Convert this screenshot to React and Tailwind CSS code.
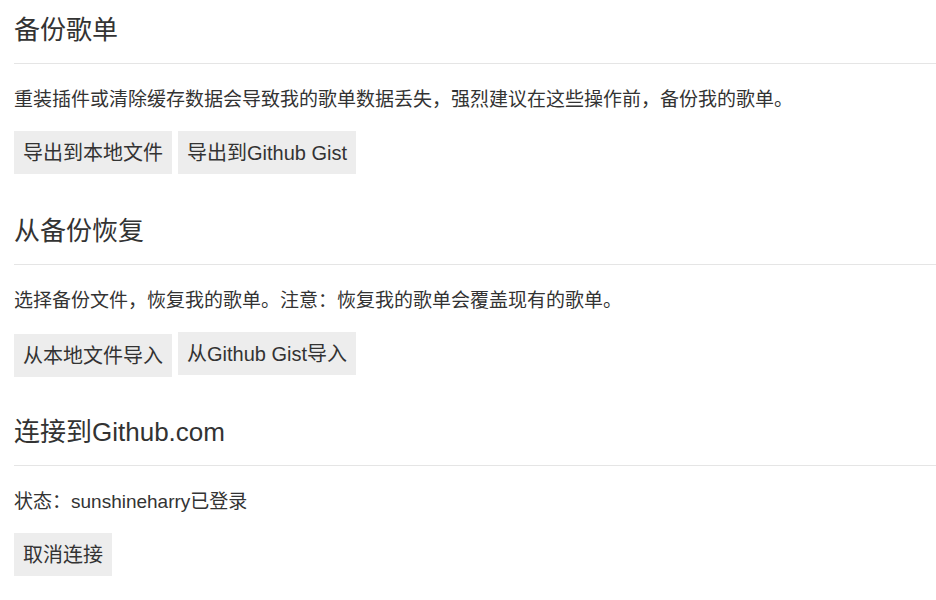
const font = { fontFamily: '"Liberation Sans", "Noto Sans CJK SC", sans-serif' };

function Section({ title, children }) {
  return (
    <section className="pt-[12px] pb-[27px] last:pb-0">
      <h2 className="text-[26px] leading-[36px] font-normal text-[#333] pb-[15px] border-b border-[#e5e5e5]">
        {title}
      </h2>
      {children}
    </section>
  );
}

function Desc({ children }) {
  return <p className="mt-[22px] text-[19px] leading-[28px] text-[#333]">{children}</p>;
}

function Btn({ children, className = "" }) {
  return (
    <button className={`bg-[#ededed] text-[#333] text-[20px] leading-[23px] px-[9px] pt-[11px] pb-[9px] whitespace-nowrap ${className}`}>
      {children}
    </button>
  );
}

export default function App() {
  return (
    <div className="min-h-screen bg-white pl-[14px]" style={font}>
      <Section title="备份歌单">
        <Desc>重装插件或清除缓存数据会导致我的歌单数据丢失，强烈建议在这些操作前，备份我的歌单。</Desc>
        <div className="mt-[17px] flex items-start gap-[6px]">
          <Btn>导出到本地文件</Btn>
          <Btn>导出到Github Gist</Btn>
        </div>
      </Section>
      <Section title="从备份恢复">
        <Desc>选择备份文件，恢复我的歌单。注意：恢复我的歌单会覆盖现有的歌单。</Desc>
        <div className="mt-[17px] flex items-start gap-[6px]">
          <Btn className="mt-[2px] -mb-[2px]">从本地文件导入</Btn>
          <Btn>从Github Gist导入</Btn>
        </div>
      </Section>
      <Section title="连接到Github.com">
        <Desc>状态：sunshineharry已登录</Desc>
        <div className="mt-[17px] flex items-start gap-[6px]">
          <Btn>取消连接</Btn>
        </div>
      </Section>
    </div>
  );
}
